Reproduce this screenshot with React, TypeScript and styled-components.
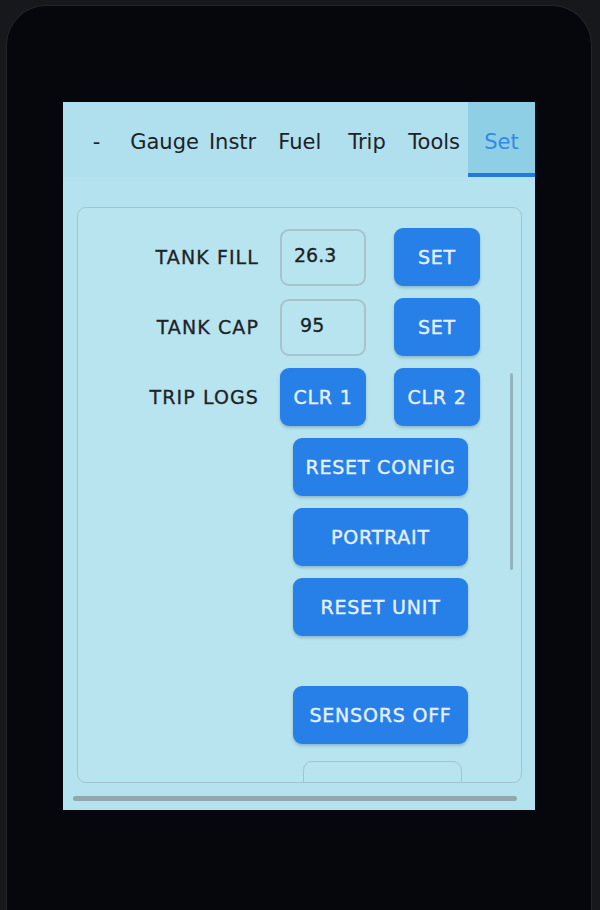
import React from 'react';
import styled, { createGlobalStyle } from 'styled-components';

const GlobalStyle = createGlobalStyle`
  html, body {
    margin: 0;
    padding: 0;
    background: #17181c;
  }
  * {
    box-sizing: border-box;
  }
`;

const Page = styled.div`
  width: 600px;
  height: 910px;
  overflow: hidden;
  padding: 5px 8px 0 6px;
`;

const Device = styled.div`
  height: 905px;
  background: #05070c;
  border-radius: 40px 40px 0 0;
  border: 1px solid #23252b;
  border-bottom: none;
  padding: 96px 0 0 56px;
`;

const Screen = styled.div`
  width: 472px;
  height: 708px;
  background: #b4e2ee;
  display: flex;
  flex-direction: column;
  font-family: 'DejaVu Sans', 'Liberation Sans', sans-serif;
`;

const TabBar = styled.div`
  display: flex;
  height: 75px;
  background: #b0e0ed;
`;

const Tab = styled.div<{ active?: boolean }>`
  flex: 1;
  display: flex;
  align-items: center;
  justify-content: center;
  padding-top: 8px;
  font-size: 21px;
  color: ${p => (p.active ? '#3489e4' : '#1d2226')};
  background: ${p => (p.active ? '#8ecfe5' : 'transparent')};
  border-bottom: 4px solid ${p => (p.active ? '#2479e0' : 'transparent')};
`;

const Body = styled.div`
  flex: 1;
  display: flex;
  flex-direction: column;
  padding: 30px 13px 0 14px;
`;

const Panel = styled.div`
  position: relative;
  height: 576px;
  overflow: hidden;
  border: 1.5px solid #a3c4cc;
  border-radius: 9px;
  background: #b8e4ef;
  padding-top: 20px;
  display: flex;
  flex-direction: column;
  gap: 12px;
`;

const Row = styled.div<{ offset?: number; space?: number }>`
  display: flex;
  align-items: center;
  height: 58px;
  flex-shrink: 0;
  padding-left: ${p => p.offset ?? 0}px;
  margin-top: ${p => p.space ?? 0}px;
`;

const Label = styled.div`
  width: 181px;
  margin-right: 21px;
  text-align: right;
  font-size: 19px;
  letter-spacing: 1.1px;
  color: #1e2327;
  -webkit-text-stroke: 0.3px #1e2327;
`;

const Field = styled.div`
  width: 86px;
  height: 57px;
  border: 2px solid #a5c4cb;
  border-radius: 9px;
  padding: 0 0 4px 12px;
  display: flex;
  align-items: center;
  font-size: 19px;
  color: #1b1f23;
  -webkit-text-stroke: 0.3px #1b1f23;
`;

const Button = styled.div<{ w?: number; gapLeft?: number }>`
  width: ${p => p.w ?? 86}px;
  height: 58px;
  margin-left: ${p => p.gapLeft ?? 0}px;
  border-radius: 9px;
  background: #2680e8;
  box-shadow: 0 2px 3px rgba(20, 60, 90, 0.25);
  display: flex;
  align-items: center;
  justify-content: center;
  font-size: 19px;
  letter-spacing: 0.8px;
  color: #e6f0fa;
  -webkit-text-stroke: 0.4px #e6f0fa;
`;

const GhostBox = styled.div`
  width: 159px;
  height: 58px;
  border: 1.5px solid #a3c4cc;
  border-radius: 9px;
`;

const ScrollThumb = styled.div`
  position: absolute;
  right: 8px;
  top: 165px;
  width: 3px;
  height: 197px;
  border-radius: 2px;
  background: #92b4bc;
`;

const HScroll = styled.div`
  margin: 13px 5px 0 -4px;
  height: 5px;
  border-radius: 3px;
  background: #8ea8ae;
`;

const tabs = ['-', 'Gauge', 'Instr', 'Fuel', 'Trip', 'Tools', 'Set'];

export default function App() {
  return (
    <>
      <GlobalStyle />
      <Page>
        <Device>
          <Screen>
            <TabBar>
              {tabs.map(t => (
                <Tab key={t} active={t === 'Set'}>
                  {t}
                </Tab>
              ))}
            </TabBar>
            <Body>
              <Panel>
                <Row>
                  <Label>TANK FILL</Label>
                  <Field>26.3</Field>
                  <Button gapLeft={28}>SET</Button>
                </Row>
                <Row>
                  <Label>TANK CAP</Label>
                  <Field>&nbsp;95</Field>
                  <Button gapLeft={28}>SET</Button>
                </Row>
                <Row>
                  <Label>TRIP LOGS</Label>
                  <Button>CLR 1</Button>
                  <Button gapLeft={28}>CLR 2</Button>
                </Row>
                <Row offset={215}>
                  <Button w={175}>RESET CONFIG</Button>
                </Row>
                <Row offset={215}>
                  <Button w={175}>PORTRAIT</Button>
                </Row>
                <Row offset={215}>
                  <Button w={175}>RESET UNIT</Button>
                </Row>
                <Row offset={215} space={38}>
                  <Button w={175}>SENSORS OFF</Button>
                </Row>
                <Row offset={225} space={5}>
                  <GhostBox />
                </Row>
                <ScrollThumb />
              </Panel>
              <HScroll />
            </Body>
          </Screen>
        </Device>
      </Page>
    </>
  );
}
